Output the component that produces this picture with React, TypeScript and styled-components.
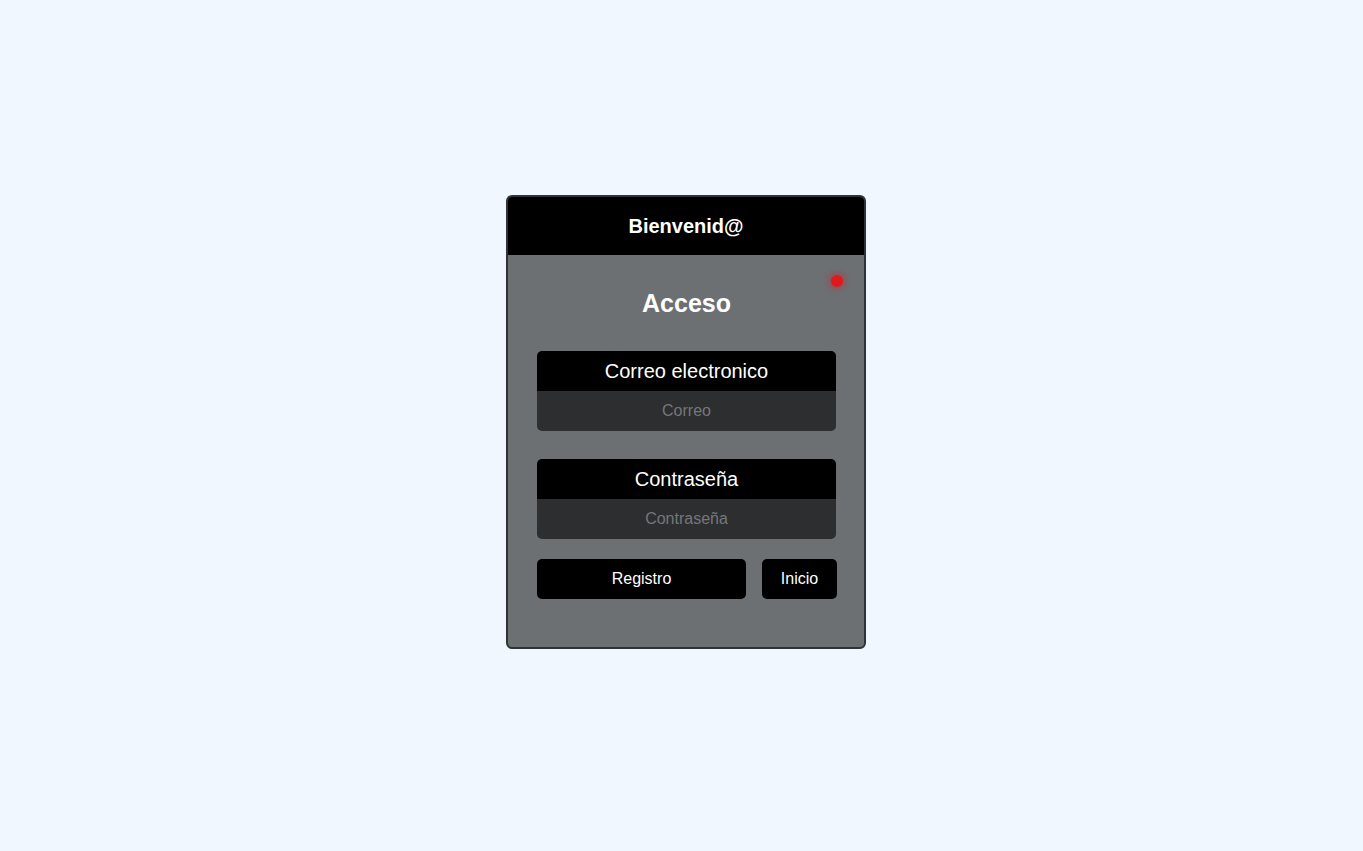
import React from "react";
import styled, { createGlobalStyle } from "styled-components";

const GlobalStyle = createGlobalStyle`
  html, body {
    margin: 0;
    padding: 0;
    background: #f0f7ff;
    font-family: "Liberation Sans", Arial, sans-serif;
  }
  * { box-sizing: border-box; }
`;

const Page = styled.main`
  min-height: 851px;
  display: flex;
  justify-content: center;
  align-items: flex-start;
  padding-top: 195px;
  padding-left: 9px;
`;

const Card = styled.section`
  width: 360px;
  border: 2px solid #2e3338;
  border-radius: 6px;
  overflow: hidden;
  background: #6c7073;
`;

const Header = styled.header`
  height: 58px;
  background: #000;
  color: #fff;
  display: flex;
  align-items: center;
  justify-content: center;
  font-size: 20px;
  font-weight: 700;
`;

const Body = styled.div`
  position: relative;
  padding: 34px 28px 48px 29px;
  display: flex;
  flex-direction: column;
`;

const StatusDot = styled.span`
  position: absolute;
  top: 20px;
  right: 21px;
  width: 12px;
  height: 12px;
  border-radius: 50%;
  background: #e0191c;
  box-shadow: 0 0 6px 2px rgba(224, 25, 28, 0.45);
`;

const Title = styled.h2`
  margin: 0 0 33px;
  text-align: center;
  color: #fff;
  font-size: 25px;
  line-height: 29px;
  font-weight: 700;
`;

const Field = styled.div<{ $gap: number }>`
  width: 299px;
  border-radius: 5px;
  overflow: hidden;
  margin-bottom: ${(p) => p.$gap}px;
`;

const Label = styled.label`
  display: flex;
  height: 40px;
  align-items: center;
  justify-content: center;
  background: #000;
  color: #fff;
  font-size: 20px;
`;

const Input = styled.input`
  display: block;
  width: 100%;
  height: 40px;
  border: none;
  outline: none;
  background: #2d2e30;
  color: #fff;
  text-align: center;
  font-family: "Liberation Sans", Arial, sans-serif;
  font-size: 16px;
  &::placeholder {
    color: #75777a;
  }
`;

const Actions = styled.div`
  display: grid;
  grid-template-columns: 209px 75px;
  column-gap: 16px;
`;

const Button = styled.button`
  height: 40px;
  border: none;
  border-radius: 5px;
  background: #000;
  color: #fff;
  font-family: "Liberation Sans", Arial, sans-serif;
  font-size: 16px;
  cursor: pointer;
`;

export default function App() {
  return (
    <>
      <GlobalStyle />
      <Page>
        <Card>
          <Header>Bienvenid@</Header>
          <Body>
            <StatusDot />
            <Title>Acceso</Title>
            <Field $gap={28}>
              <Label htmlFor="correo">Correo electronico</Label>
              <Input id="correo" type="email" placeholder="Correo" />
            </Field>
            <Field $gap={20}>
              <Label htmlFor="pass">Contraseña</Label>
              <Input id="pass" type="password" placeholder="Contraseña" />
            </Field>
            <Actions>
              <Button>Registro</Button>
              <Button>Inicio</Button>
            </Actions>
          </Body>
        </Card>
      </Page>
    </>
  );
}
